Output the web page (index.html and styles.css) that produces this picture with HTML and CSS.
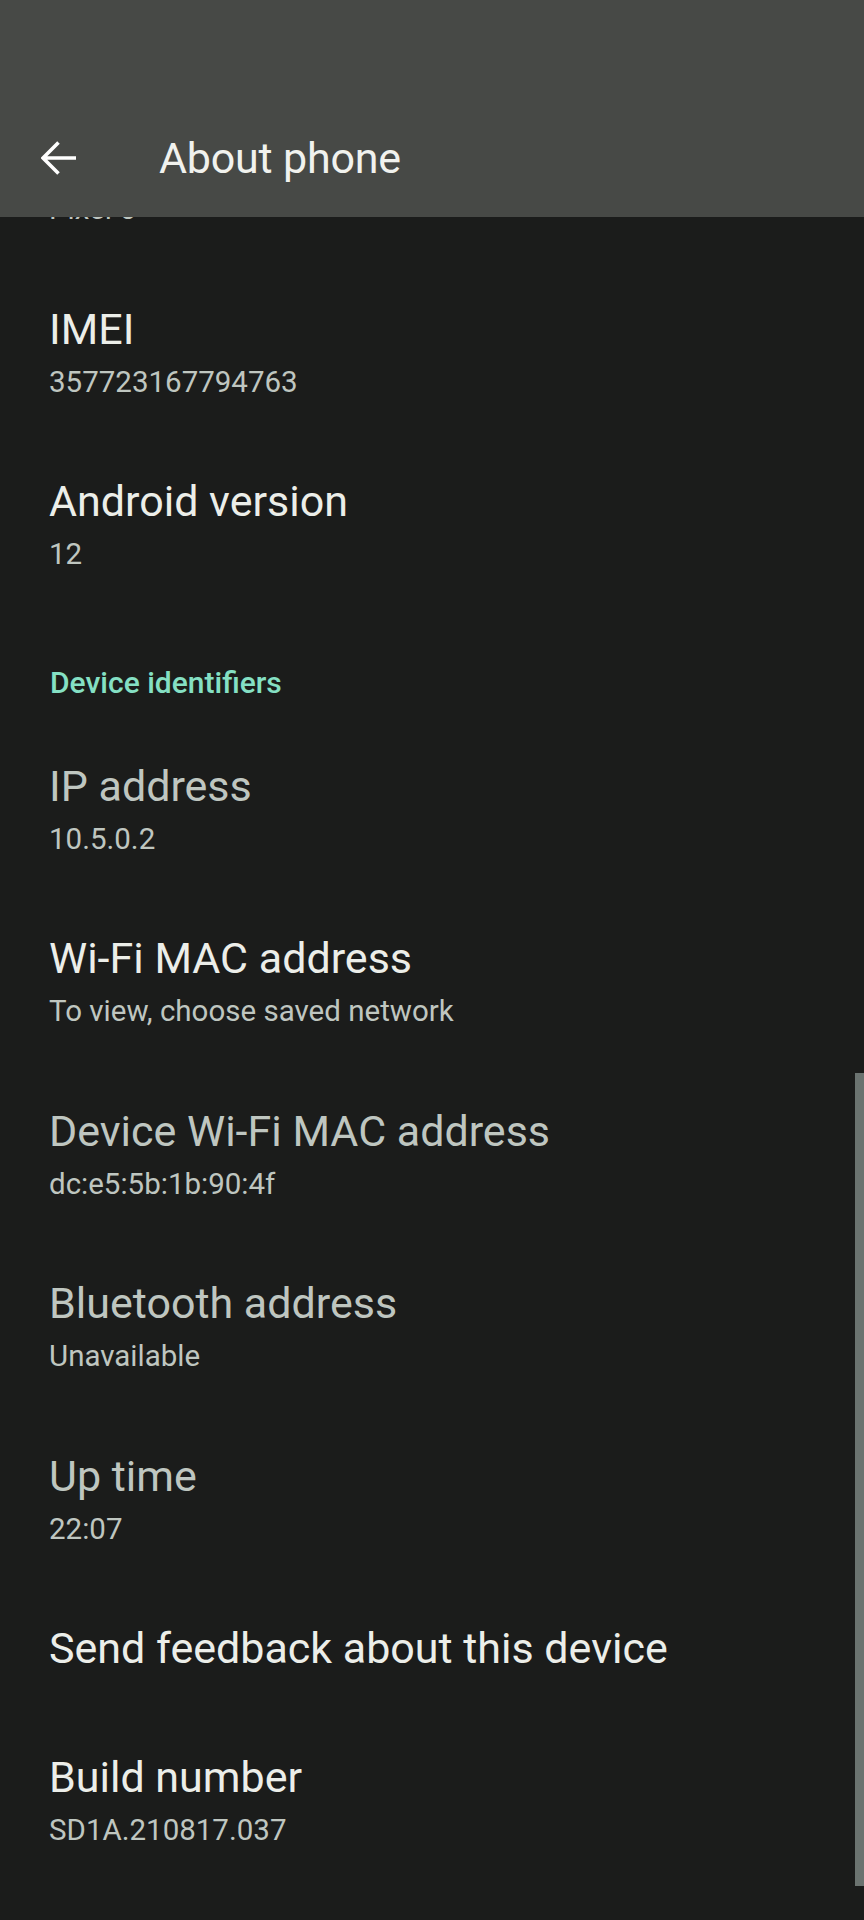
FILE: index.html
```html
<!DOCTYPE html>
<html>
<head>
    <title>About phone</title>
    <link rel="stylesheet" href="styles.css">
</head>
<body>
<header class="toolbar">
    <div class="toolbar-row">
        <a href="#" class="back-button" aria-label="Back">
            <svg width="36" height="34" viewBox="0 0 36 34">
                <path d="M17.5 1.5 L2 17 L17.5 32.5 M2 17 H35" fill="none" stroke="#ffffff" stroke-width="3.6"/>
            </svg>
        </a>
        <h1>About phone</h1>
    </div>
</header>
<main class="list">
    <!-- Model row, scrolled mostly under the toolbar -->
    <div class="pref first">
        <div class="pref-summary">Pixel 5</div>
    </div>
    <div class="pref">
        <div class="pref-title">IMEI</div>
        <div class="pref-summary">357723167794763</div>
    </div>
    <div class="pref">
        <div class="pref-title">Android version</div>
        <div class="pref-summary">12</div>
    </div>

    <div class="category">Device identifiers</div>

    <div class="pref disabled">
        <div class="pref-title">IP address</div>
        <div class="pref-summary">10.5.0.2</div>
    </div>
    <div class="pref">
        <div class="pref-title">Wi-Fi MAC address</div>
        <div class="pref-summary">To view, choose saved network</div>
    </div>
    <div class="pref disabled">
        <div class="pref-title">Device Wi-Fi MAC address</div>
        <div class="pref-summary">dc:e5:5b:1b:90:4f</div>
    </div>
    <div class="pref disabled">
        <div class="pref-title">Bluetooth address</div>
        <div class="pref-summary">Unavailable</div>
    </div>
    <div class="pref disabled">
        <div class="pref-title">Up time</div>
        <div class="pref-summary">22:07</div>
    </div>
    <div class="pref single">
        <div class="pref-title">Send feedback about this device</div>
    </div>
    <div class="pref">
        <div class="pref-title">Build number</div>
        <div class="pref-summary">SD1A.210817.037</div>
    </div>
</main>
<div class="scrollbar"></div>
</body>
</html>
```

FILE: styles.css
```css
html, body {
    margin: 0;
    padding: 0;
}

body {
    width: 864px;
    height: 1920px;
    overflow: hidden;
    background-color: #1b1c1b;
    font-family: Roboto, "Noto Sans", sans-serif;
    color: #eceee9;
    position: relative;
}

/* Top app bar (status bar area is the same colour) */
.toolbar {
    height: 217px;
    background-color: #474946;
    display: flex;
    align-items: flex-end;
}

.toolbar-row {
    height: 118px;
    width: 100%;
    display: flex;
    align-items: center;
}

.back-button {
    display: flex;
    margin-left: 41px;
    width: 36px;
    height: 34px;
}

h1 {
    margin: 0 0 0 82px;
    font-size: 43px;
    font-weight: 400;
    color: #f1f2ee;
    letter-spacing: -0.2px;
}

/* Preference list */
.list {
    height: 1703px;
    overflow: hidden;
}

.pref {
    padding: 34.75px 80px 34.75px 49px;
    box-sizing: border-box;
}

.pref.first {
    padding-top: 0;
    margin-top: -33px;
}

.pref.single {
    min-height: 129.2px;
}

.pref-title {
    font-size: 43px;
    line-height: 56px;
    color: #eceee9;
}

.pref-summary {
    margin-top: 3px;
    font-size: 29.5px;
    line-height: 44px;
    color: #bfc6c0;
}

.pref.disabled .pref-title {
    color: #bfc6c0;
}

.category {
    padding: 51.8px 49px 20.5px 50px;
    font-size: 30px;
    line-height: 40px;
    font-weight: 500;
    color: #85e0c4;
}

.scrollbar {
    position: absolute;
    left: 855px;
    top: 1073px;
    width: 9px;
    height: 813px;
    background-color: #6b7370;
}
```
